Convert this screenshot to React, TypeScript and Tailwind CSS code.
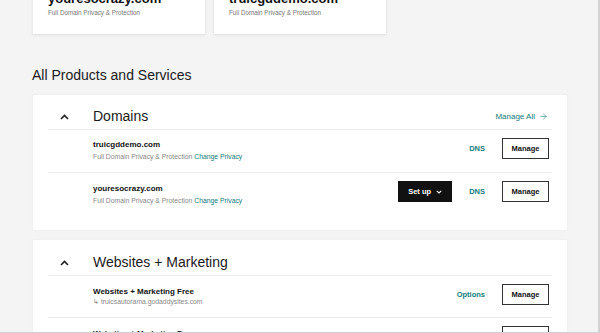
import { ArrowRight } from 'lucide-react'

const featured = [
  { name: 'youresocrazy.com', note: 'Full Domain Privacy & Protection' },
  { name: 'truicgddemo.com', note: 'Full Domain Privacy & Protection' },
]

const domains = [
  { name: 'truicgddemo.com', setup: false },
  { name: 'youresocrazy.com', setup: true },
]

function ChevronUp() {
  return (
    <svg width="9" height="6" viewBox="0 0 9 6" fill="none">
      <path d="M1 5 L4.5 1.5 L8 5" stroke="#222" strokeWidth="1.6" />
    </svg>
  )
}

function ManageButton() {
  return (
    <button className="h-[21px] w-[47px] border-[1.5px] border-[#333] bg-white text-[7.5px] font-bold text-[#111]">
      Manage
    </button>
  )
}

function SectionHeader({ title, action }: { title: string; action?: boolean }) {
  return (
    <div className="flex h-[35px] items-center pt-[9px] border-b border-[#ededed]">
      <div className="flex w-[45px] justify-center pr-[12px]">
        <ChevronUp />
      </div>
      <h3 className="flex-1 text-[14px] text-[#1a1a1a]">{title}</h3>
      {action && (
        <a href="#" className="flex items-center gap-[4px] pr-[4px] text-[8px] text-[#137b7d]">
          Manage All
          <ArrowRight size={9} strokeWidth={1.5} />
        </a>
      )}
    </div>
  )
}

export default function App() {
  return (
    <div
      className="h-[333px] w-[600px] overflow-hidden bg-[#f4f4f4] border-r-2 border-b border-[#d2d2d2]"
      style={{ fontFamily: '"Liberation Sans", Arial, sans-serif' }}
    >
      <div className="pl-[33px] pr-[31px]">
        {/* Featured domains */}
        <div className="-mt-[20px] flex gap-[9px]">
          {featured.map((d) => (
            <div
              key={d.name}
              className="w-[172px] bg-white px-[15px] pt-[11px] pb-[17px] shadow-[0_1px_3px_rgba(0,0,0,0.1)]"
            >
              <div className="text-[13px] font-bold leading-[16px] text-[#111]">{d.name}</div>
              <div className="mt-[2px] text-[6.3px] leading-[8px] text-[#777]">{d.note}</div>
            </div>
          ))}
        </div>

        <h2 className="mt-[31px] mb-[10px] -ml-px text-[14px] leading-[20px] text-[#1a1a1a]">
          All Products and Services
        </h2>

        {/* Domains */}
        <div className="bg-white px-[15px] pb-[22px] shadow-[0_0_2px_rgba(0,0,0,0.06)]">
          <SectionHeader title="Domains" action />
          {domains.map((d, i) => (
            <div
              key={d.name}
              className={`flex items-start pl-[45px] pr-[3px] ${i === 0 ? 'border-b border-[#ededed] h-[43px]' : 'h-[35px]'}`}
            >
              <div className={`flex-1 ${i === 0 ? 'pt-[10px]' : 'pt-[11px]'}`}>
                <div className="text-[8px] font-bold leading-[10px] text-[#111]">{d.name}</div>
                <div className="mt-[3px] text-[6.8px] leading-[8px] text-[#888]">
                  Full Domain Privacy &amp; Protection{' '}
                  <a href="#" className="text-[#137b7d]">Change Privacy</a>
                </div>
              </div>
              <div className="mt-[8px] flex items-center">
                {d.setup && (
                  <button className="mr-[17px] flex h-[21px] w-[54px] items-center justify-center gap-[5px] bg-[#111] text-[7.5px] font-bold text-white">
                    Set up
                    <svg width="6" height="4" viewBox="0 0 6 4" fill="none">
                      <path d="M0.8 0.8 L3 3 L5.2 0.8" stroke="#fff" strokeWidth="1.1" />
                    </svg>
                  </button>
                )}
                <span className="mr-[17px] text-[7.5px] font-bold text-[#137b7d]">DNS</span>
                <ManageButton />
              </div>
            </div>
          ))}
        </div>

        {/* Websites + Marketing */}
        <div className="mt-[10px] bg-white px-[15px] shadow-[0_0_2px_rgba(0,0,0,0.06)]">
          <div className="pt-px">
            <SectionHeader title="Websites + Marketing" />
          </div>
          {[0, 1].map((i) => (
            <div
              key={i}
              className="flex h-[42px] items-start border-b border-[#ededed] pl-[45px] pr-[3px]"
            >
              <div className="flex-1 pt-[11px]">
                <div className="text-[8px] font-bold leading-[10px] text-[#111]">
                  Websites + Marketing Free
                </div>
                <div className="mt-[1px] text-[6.8px] leading-[8px] text-[#888]">
                  ↳ truicsautorama.godaddysites.com
                </div>
              </div>
              <div className="mt-[8px] flex items-center">
                <span className="mr-[17px] text-[7.5px] font-bold text-[#137b7d]">Options</span>
                <ManageButton />
              </div>
            </div>
          ))}
        </div>
      </div>
    </div>
  )
}
